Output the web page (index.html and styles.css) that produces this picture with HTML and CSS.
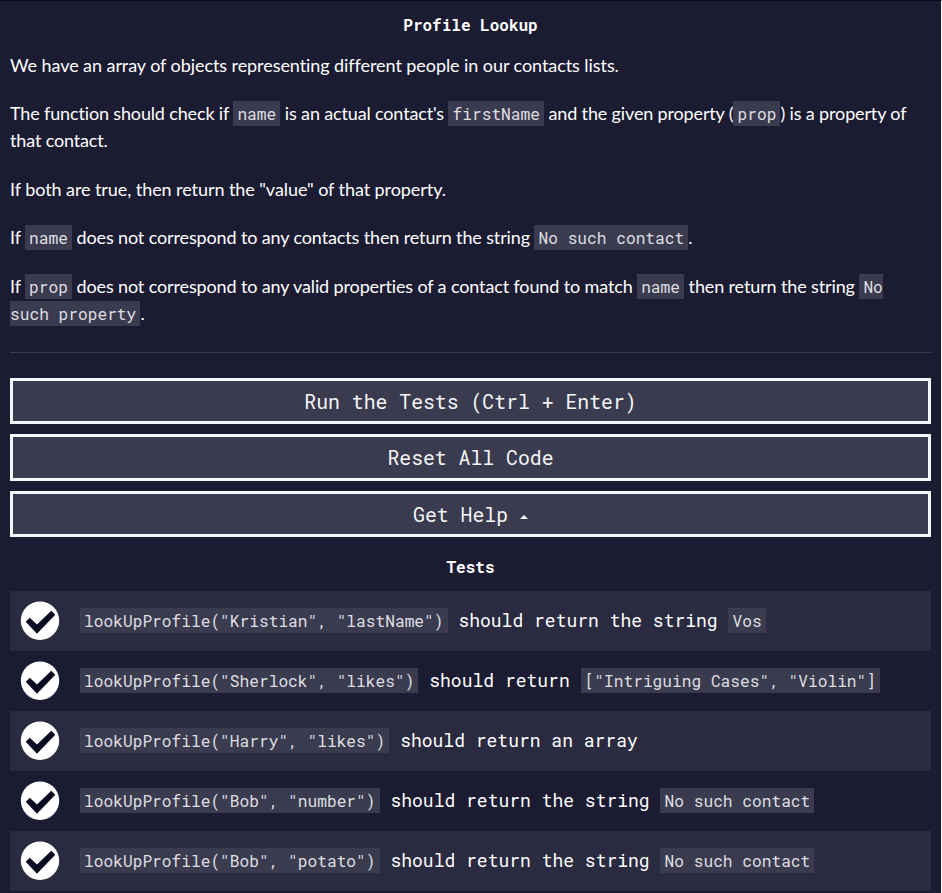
FILE: index.html
```html
<!DOCTYPE html>
<html lang="en">
<head>
<meta charset="utf-8">
<title>Profile Lookup</title>
<link rel="stylesheet" href="styles.css">
</head>
<body>
<main class="panel">
  <h1 class="heading">Profile Lookup</h1>
  <section class="description">
    <p>We have an array of objects representing different people in our contacts lists.</p>
    <p class="tight">The function should check if <code>name</code> is an actual contact's <code>firstName</code> and the given property (<code>prop</code>) is a property of that contact.</p>
    <p>If both are true, then return the "value" of that property.</p>
    <p class="snug">If <code>name</code> does not correspond to any contacts then return the string <code>No such contact</code>.</p>
    <p class="snug">If <code>prop</code> does not correspond to any valid properties of a contact found to match <code>name</code> then return the string <code>No such property</code>.</p>
  </section>
  <hr class="divider">
  <div class="actions">
    <button class="btn" type="button">Run the Tests (Ctrl + Enter)</button>
    <button class="btn" type="button">Reset All Code</button>
    <button class="btn" type="button">Get Help <span class="caret"></span></button>
  </div>
  <h2 class="heading tests-heading">Tests</h2>
  <ul class="tests">
    <li class="test"><svg class="check" viewBox="0 0 40 40"><circle cx="20" cy="19.7" r="19.2"/><path d="M5.7 20.7 9.7 16.7 17 23.5 31.3 9.7 35.3 13.8 17 32.7Z"/></svg><p><code>lookUpProfile("Kristian", "lastName")</code> should return the string <code>Vos</code></p></li>
    <li class="test"><svg class="check" viewBox="0 0 40 40"><circle cx="20" cy="19.7" r="19.2"/><path d="M5.7 20.7 9.7 16.7 17 23.5 31.3 9.7 35.3 13.8 17 32.7Z"/></svg><p><code>lookUpProfile("Sherlock", "likes")</code> should return <code>["Intriguing Cases", "Violin"]</code></p></li>
    <li class="test"><svg class="check" viewBox="0 0 40 40"><circle cx="20" cy="19.7" r="19.2"/><path d="M5.7 20.7 9.7 16.7 17 23.5 31.3 9.7 35.3 13.8 17 32.7Z"/></svg><p><code>lookUpProfile("Harry", "likes")</code> should return an array</p></li>
    <li class="test"><svg class="check" viewBox="0 0 40 40"><circle cx="20" cy="19.7" r="19.2"/><path d="M5.7 20.7 9.7 16.7 17 23.5 31.3 9.7 35.3 13.8 17 32.7Z"/></svg><p><code>lookUpProfile("Bob", "number")</code> should return the string <code>No such contact</code></p></li>
    <li class="test"><svg class="check" viewBox="0 0 40 40"><circle cx="20" cy="19.7" r="19.2"/><path d="M5.7 20.7 9.7 16.7 17 23.5 31.3 9.7 35.3 13.8 17 32.7Z"/></svg><p><code>lookUpProfile("Bob", "potato")</code> should return the string <code>No such contact</code></p></li>
  </ul>
</main>
</body>
</html>
```
FILE: styles.css
```css
* { box-sizing: border-box; }

body {
  margin: 0;
  height: 893px;
  overflow: hidden;
  background: #1b1b32;
  color: #fff;
  font-family: Lato, sans-serif;
  font-size: 18px;
  line-height: 27px;
}

.panel {
  height: 893px;
  padding: 10px 10px 0;
  border-top: 1px solid #0a0a23;
  border-right: 1px solid #f5f6f7;
}

.heading {
  margin: 0;
  font: bold 16px/27px "Roboto Mono", "DejaVu Sans Mono", monospace;
  text-align: center;
}

.description { padding-top: 13.6px; }

.description p {
  margin: 0 0 21.6px;
  letter-spacing: -0.07px;
}

.description .tight { letter-spacing: -0.15px; }
.description .snug { letter-spacing: -0.13px; }

code {
  padding: 2px 4.1px;
  background: #3b3b4f;
  color: #dfdfe2;
  font: 16.2px/1 "Roboto Mono", "DejaVu Sans Mono", monospace;
  letter-spacing: 0;
}

.divider {
  height: 1px;
  margin: 25px 0;
  border: 0;
  background: #3b3b4f;
}

.actions {
  display: grid;
  gap: 10px;
}

.btn {
  height: 46.4px;
  padding: 1px 0 0;
  border: 3px solid #f5f6f7;
  background: #3b3b4f;
  color: #f5f6f7;
  font: 19.8px/1.4 "Roboto Mono", "DejaVu Sans Mono", monospace;
}

.caret {
  display: inline-block;
  border: 4px solid transparent;
  border-top: 0;
  border-bottom-color: #f5f6f7;
  vertical-align: 3px;
}

.tests-heading { margin-top: 15.8px; }

.tests {
  margin: 11px 0 0;
  padding: 0;
  list-style: none;
}

.test {
  display: flex;
  align-items: center;
  gap: 20px;
  height: 60px;
  padding-left: 10px;
}

.test:nth-child(odd) { background: #2a2a40; }

.test p {
  margin: 0;
  font: 18px/27px "Roboto Mono", "DejaVu Sans Mono", monospace;
}

.check { width: 40px; height: 40px; }
.check circle { fill: #fff; }
.check path { fill: #0a0a23; }
```
